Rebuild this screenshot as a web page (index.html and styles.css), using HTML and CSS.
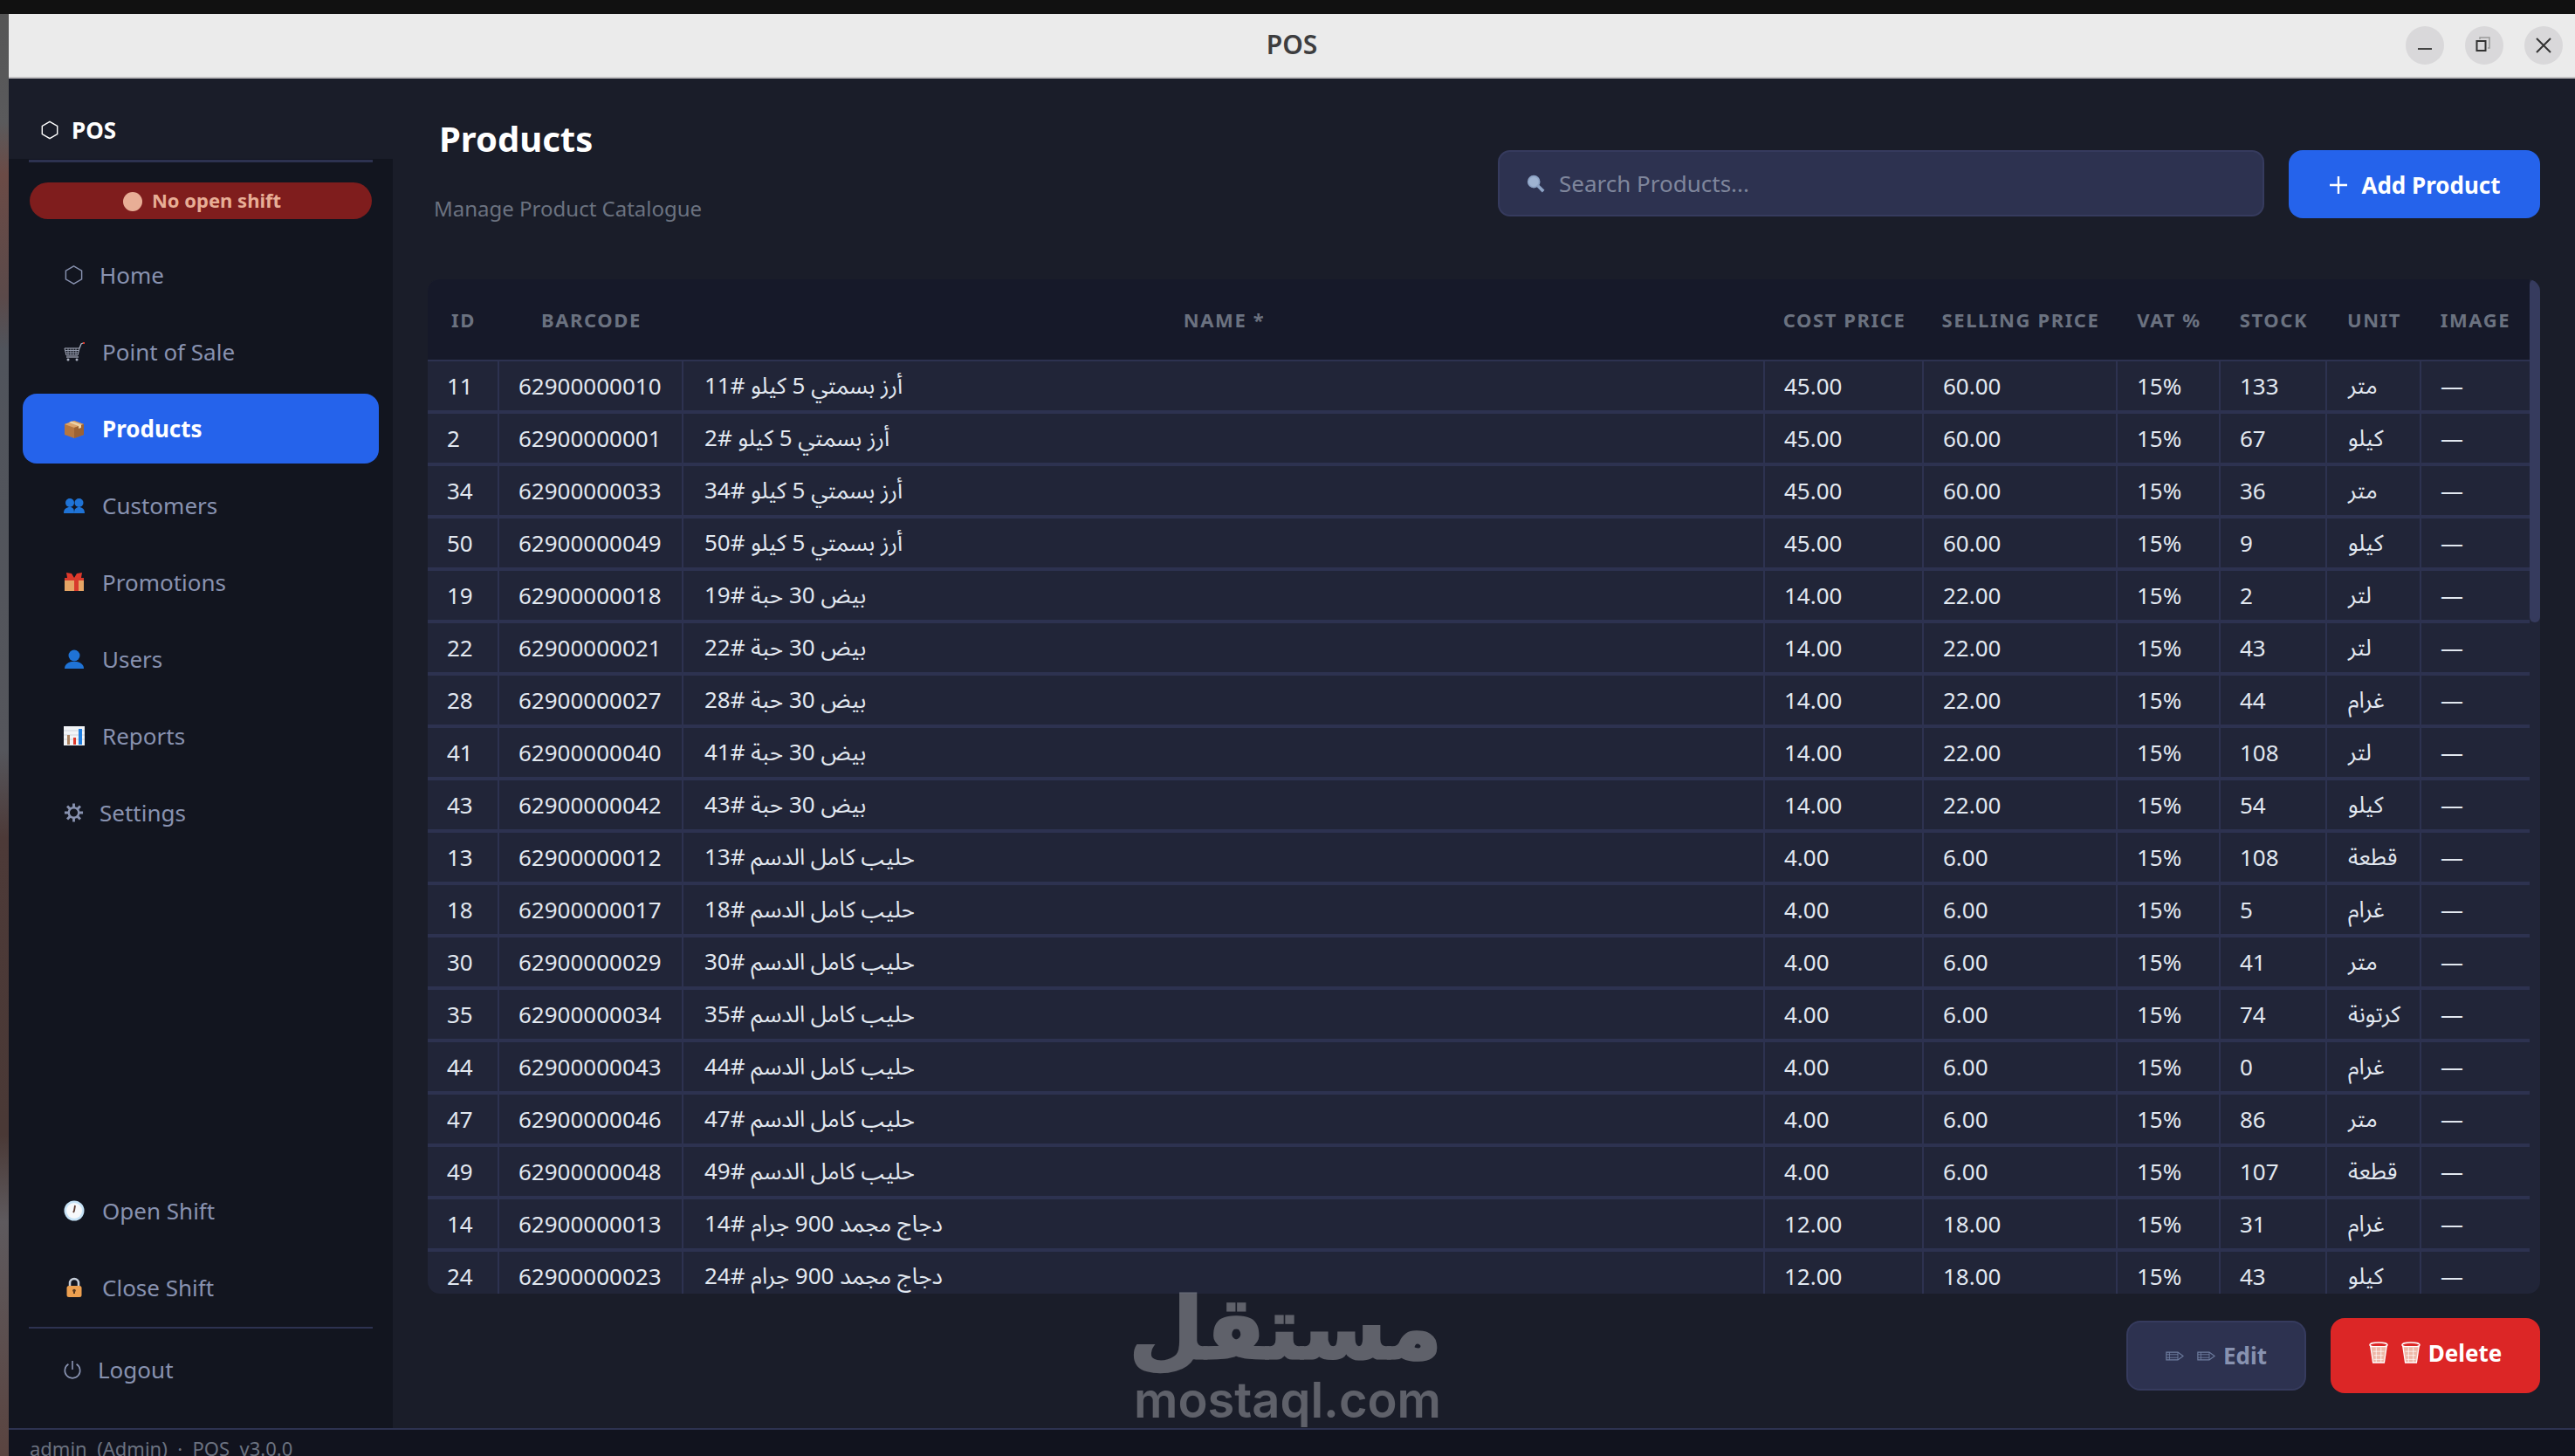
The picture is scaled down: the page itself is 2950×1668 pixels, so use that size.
FILE: index.html
```html
<!DOCTYPE html>
<html lang="en">
<head>
<meta charset="utf-8">
<title>POS</title>
<link rel="stylesheet" href="styles.css">
</head>
<body>
<svg class="defs" width="0" height="0" aria-hidden="true">
  <symbol id="i-hex" viewBox="0 0 24 24"><path d="M12 1.500 21.500 7v10L12 22.500 2.500 17V7z" fill="none" stroke="currentColor" stroke-width="1.500"/></symbol>
  <symbol id="i-cart" viewBox="0 0 24 24"><path d="M1 8h17l-2 8H3z" fill="none" stroke="#aab0c0" stroke-width="1"/><path d="M1 10.500h17M2 13h15M5 8v8M8 8v8M11 8v8M14 8v8" stroke="#8f96a8" stroke-width="1"/><path d="M18 8l2-5 2-1" fill="none" stroke="#aab0c0" stroke-width="1.300"/><path d="M22 1h2v2h-2z" fill="#e0392b"/><path d="M3 18h14" stroke="#aab0c0" stroke-width="1.200"/><circle cx="5" cy="21" r="1.500" fill="#aab0c0"/><circle cx="15" cy="21" r="1.500" fill="#aab0c0"/></symbol>
  <symbol id="i-box" viewBox="0 0 24 24"><path d="M1 7 12 3l11 4v12l-11 4L1 19z" fill="#b5763f"/><path d="M1 7l11 4 11-4-11-4z" fill="#dba36a"/><path d="M12 11v12l11-4V7z" fill="#9c6233"/><path d="M6 5l11 4v3l3-1V7.500L9 3.500z" fill="#ecd3a8"/></symbol>
  <symbol id="i-people" viewBox="0 0 24 24"><g fill="#1f73d6"><circle cx="7" cy="9" r="5"/><circle cx="17.500" cy="9" r="5"/><path d="M0 21c0-5 3-7 7-7s5 2 5 7zM12 21c0-5 2-7 5.500-7S24 16 24 21z"/></g></symbol>
  <symbol id="i-gift" viewBox="0 0 24 24"><path d="M1 7h22v15H1z" fill="#e5a565"/><path d="M12 7h5v15h-5z" fill="#d83a2c"/><path d="M1 7h22v3H1z" fill="#d83a2c"/><path d="M3 1l6 1 3 5 3-5 6-1-1 6H4z" fill="#e0392b"/></symbol>
  <symbol id="i-user" viewBox="0 0 24 24"><g fill="#1f73d6"><circle cx="12" cy="8" r="6.500"/><path d="M1 23c0-5 4-7 8-8h6c4 1 8 3 8 8z"/></g></symbol>
  <symbol id="i-chart" viewBox="0 0 24 24"><path d="M0 1h24v22H0z" fill="#f2f4f7"/><path d="M0 6h24M0 11h24M0 16h24" stroke="#cfd4dc"/><path d="M4 11h3v11H4z" fill="#a9815f"/><path d="M11 14h3v8h-3z" fill="#e0392b"/><path d="M17 4h4v18h-4z" fill="#1f7ee0"/></symbol>
  <symbol id="i-gear" viewBox="0 0 24 24"><circle cx="12" cy="12" r="6" fill="none" stroke="currentColor" stroke-width="2.500"/><path d="M12 1v5M12 18v5M1 12h5M18 12h5M4.200 4.200l3.500 3.500M16.300 16.300l3.500 3.500M19.800 4.200l-3.500 3.500M7.700 16.300l-3.500 3.500" stroke="currentColor" stroke-width="3"/></symbol>
  <symbol id="i-clock" viewBox="0 0 24 24"><circle cx="12" cy="12" r="11.500" fill="#c6e3f7"/><circle cx="12" cy="12" r="9" fill="#f7f9fb"/><path d="M12 12l1-6M12 12l-1 2" stroke="#5a3a30" stroke-width="1.800"/></symbol>
  <symbol id="i-lock" viewBox="0 0 24 24"><path d="M7 11V7a5 5 0 0 1 10 0v4" fill="none" stroke="#c4ccd8" stroke-width="2.500"/><rect x="3.500" y="10" width="17" height="13" rx="2.500" fill="#eda050"/><circle cx="12" cy="15.500" r="1.800" fill="#5a3a20"/><path d="M11 16h2v3h-2z" fill="#5a3a20"/></symbol>
  <symbol id="i-power" viewBox="0 0 24 24"><path d="M7 5.200a9.500 9.500 0 1 0 10 0M12 1v11" fill="none" stroke="currentColor" stroke-width="1.800"/></symbol>
  <symbol id="i-search" viewBox="0 0 24 24"><circle cx="10" cy="10" r="7" fill="#9fb3d1" stroke="#8ea4c6" stroke-width="2"/><path d="M15 15l7 7" stroke="#8ea4c6" stroke-width="4"/></symbol>
  <symbol id="i-pencil" viewBox="0 0 24 14"><path d="M1 2h15l7 5-7 5H1z" fill="none" stroke="currentColor" stroke-width="1.300"/><path d="M1 5h15M1 9h15M5 2v10M16 2v10" stroke="currentColor" stroke-width="1"/></symbol>
  <symbol id="i-trash" viewBox="0 0 24 28"><ellipse cx="12" cy="4" rx="11" ry="3" fill="none" stroke="#fff" stroke-width="1.600"/><path d="M2 6l3 20h14l3-20z" fill="#eeb8a8" stroke="#fff" stroke-width="1.400"/><path d="M5 12h14M6 17h12M6 22h12M9 7v19M15 7v19" stroke="#fff" stroke-width=".8"/></symbol>
</svg>
<div class="top-strip"></div>
<div class="window">
  <header class="titlebar">
    <span class="title">POS</span>
    <div class="controls">
      <span class="ctl"><svg width="24" height="24" viewBox="0 0 24 24"><path d="M4 16h16" stroke="#444" stroke-width="2"/></svg></span>
      <span class="ctl"><svg width="24" height="24" viewBox="0 0 24 24"><path d="M7 5V3h11v12h-2" fill="none" stroke="#999" stroke-width="1.500"/><rect x="3.500" y="7" width="10" height="11" fill="none" stroke="#333" stroke-width="2"/></svg></span>
      <span class="ctl"><svg width="24" height="24" viewBox="0 0 24 24"><path d="M4 4l16 16M20 4 4 20" stroke="#333" stroke-width="2"/></svg></span>
    </div>
  </header>
  <div class="app">
    <aside class="sidebar">
      <div class="brand"><svg class="brand-icon"><use href="#i-hex"/></svg><span>POS</span></div>
      <div class="side-body">
        <div class="rule"></div>
        <div class="shift-badge"><span class="dot"></span><span>No open shift</span></div>
        <nav class="nav">
          <a class="item thin"><svg class="ico"><use href="#i-hex"/></svg>Home</a>
          <a class="item"><svg class="ico"><use href="#i-cart"/></svg>Point of Sale</a>
          <a class="item active"><svg class="ico"><use href="#i-box"/></svg>Products</a>
          <a class="item"><svg class="ico"><use href="#i-people"/></svg>Customers</a>
          <a class="item"><svg class="ico"><use href="#i-gift"/></svg>Promotions</a>
          <a class="item"><svg class="ico"><use href="#i-user"/></svg>Users</a>
          <a class="item"><svg class="ico"><use href="#i-chart"/></svg>Reports</a>
          <a class="item thin"><svg class="ico"><use href="#i-gear"/></svg>Settings</a>
        </nav>
        <nav class="nav nav-bottom">
          <a class="item"><svg class="ico"><use href="#i-clock"/></svg>Open Shift</a>
          <a class="item"><svg class="ico"><use href="#i-lock"/></svg>Close Shift</a>
        </nav>
        <div class="rule rule-low"></div>
        <a class="item logout"><svg class="ico"><use href="#i-power"/></svg>Logout</a>
      </div>
    </aside>
    <main class="main">
      <section class="head">
        <div class="head-text">
          <h1>Products</h1>
          <p>Manage Product Catalogue</p>
        </div>
        <div class="search"><svg class="search-ico"><use href="#i-search"/></svg><span>Search Products...</span></div>
        <button class="add"><svg class="plus" viewBox="0 0 20 20"><path d="M10 0v20M0 10h20" stroke="#fff" stroke-width="2.400"/></svg>Add Product</button>
      </section>
      <section class="table-card">
        <div class="table-scroll">
          <table>
            <colgroup><col class="c1"><col class="c2"><col class="c3"><col class="c4"><col class="c5"><col class="c6"><col class="c7"><col class="c8"><col class="c9"></colgroup>
            <thead><tr><th>ID</th><th>BARCODE</th><th>NAME *</th><th>COST PRICE</th><th>SELLING PRICE</th><th>VAT %</th><th>STOCK</th><th>UNIT</th><th>IMAGE</th></tr></thead>
            <tbody>
              <tr><td>11</td><td>62900000010</td><td class="ar" dir="rtl">أرز بسمتي 5 كيلو #11</td><td>45.00</td><td>60.00</td><td>15%</td><td>133</td><td class="ar" dir="rtl">متر</td><td>—</td></tr>
              <tr><td>2</td><td>62900000001</td><td class="ar" dir="rtl">أرز بسمتي 5 كيلو #2</td><td>45.00</td><td>60.00</td><td>15%</td><td>67</td><td class="ar" dir="rtl">كيلو</td><td>—</td></tr>
              <tr><td>34</td><td>62900000033</td><td class="ar" dir="rtl">أرز بسمتي 5 كيلو #34</td><td>45.00</td><td>60.00</td><td>15%</td><td>36</td><td class="ar" dir="rtl">متر</td><td>—</td></tr>
              <tr><td>50</td><td>62900000049</td><td class="ar" dir="rtl">أرز بسمتي 5 كيلو #50</td><td>45.00</td><td>60.00</td><td>15%</td><td>9</td><td class="ar" dir="rtl">كيلو</td><td>—</td></tr>
              <tr><td>19</td><td>62900000018</td><td class="ar" dir="rtl">بيض 30 حبة #19</td><td>14.00</td><td>22.00</td><td>15%</td><td>2</td><td class="ar" dir="rtl">لتر</td><td>—</td></tr>
              <tr><td>22</td><td>62900000021</td><td class="ar" dir="rtl">بيض 30 حبة #22</td><td>14.00</td><td>22.00</td><td>15%</td><td>43</td><td class="ar" dir="rtl">لتر</td><td>—</td></tr>
              <tr><td>28</td><td>62900000027</td><td class="ar" dir="rtl">بيض 30 حبة #28</td><td>14.00</td><td>22.00</td><td>15%</td><td>44</td><td class="ar" dir="rtl">غرام</td><td>—</td></tr>
              <tr><td>41</td><td>62900000040</td><td class="ar" dir="rtl">بيض 30 حبة #41</td><td>14.00</td><td>22.00</td><td>15%</td><td>108</td><td class="ar" dir="rtl">لتر</td><td>—</td></tr>
              <tr><td>43</td><td>62900000042</td><td class="ar" dir="rtl">بيض 30 حبة #43</td><td>14.00</td><td>22.00</td><td>15%</td><td>54</td><td class="ar" dir="rtl">كيلو</td><td>—</td></tr>
              <tr><td>13</td><td>62900000012</td><td class="ar" dir="rtl">حليب كامل الدسم #13</td><td>4.00</td><td>6.00</td><td>15%</td><td>108</td><td class="ar" dir="rtl">قطعة</td><td>—</td></tr>
              <tr><td>18</td><td>62900000017</td><td class="ar" dir="rtl">حليب كامل الدسم #18</td><td>4.00</td><td>6.00</td><td>15%</td><td>5</td><td class="ar" dir="rtl">غرام</td><td>—</td></tr>
              <tr><td>30</td><td>62900000029</td><td class="ar" dir="rtl">حليب كامل الدسم #30</td><td>4.00</td><td>6.00</td><td>15%</td><td>41</td><td class="ar" dir="rtl">متر</td><td>—</td></tr>
              <tr><td>35</td><td>62900000034</td><td class="ar" dir="rtl">حليب كامل الدسم #35</td><td>4.00</td><td>6.00</td><td>15%</td><td>74</td><td class="ar" dir="rtl">كرتونة</td><td>—</td></tr>
              <tr><td>44</td><td>62900000043</td><td class="ar" dir="rtl">حليب كامل الدسم #44</td><td>4.00</td><td>6.00</td><td>15%</td><td>0</td><td class="ar" dir="rtl">غرام</td><td>—</td></tr>
              <tr><td>47</td><td>62900000046</td><td class="ar" dir="rtl">حليب كامل الدسم #47</td><td>4.00</td><td>6.00</td><td>15%</td><td>86</td><td class="ar" dir="rtl">متر</td><td>—</td></tr>
              <tr><td>49</td><td>62900000048</td><td class="ar" dir="rtl">حليب كامل الدسم #49</td><td>4.00</td><td>6.00</td><td>15%</td><td>107</td><td class="ar" dir="rtl">قطعة</td><td>—</td></tr>
              <tr><td>14</td><td>62900000013</td><td class="ar" dir="rtl">دجاج مجمد 900 جرام #14</td><td>12.00</td><td>18.00</td><td>15%</td><td>31</td><td class="ar" dir="rtl">غرام</td><td>—</td></tr>
              <tr><td>24</td><td>62900000023</td><td class="ar" dir="rtl">دجاج مجمد 900 جرام #24</td><td>12.00</td><td>18.00</td><td>15%</td><td>43</td><td class="ar" dir="rtl">كيلو</td><td>—</td></tr>
            </tbody>
          </table>
        </div>
        <div class="scrollbar"><div class="thumb"></div></div>
      </section>
      <section class="actions">
        <button class="edit"><svg class="pen"><use href="#i-pencil"/></svg><svg class="pen pen-last"><use href="#i-pencil"/></svg>Edit</button>
        <button class="delete"><svg class="bin"><use href="#i-trash"/></svg><svg class="bin bin-last"><use href="#i-trash"/></svg>Delete</button>
      </section>
    </main>
  </div>
  <footer class="status">admin&nbsp; (Admin) &nbsp;·&nbsp; POS&nbsp; v3.0.0</footer>
</div>
<div class="watermark">
  <div class="wm-ar" dir="rtl">مستقل</div>
  <div class="wm-en">mostaql.com</div>
</div>
</body>
</html>
```
FILE: styles.css
```css
* { box-sizing: border-box; }
html, body { margin: 0; height: 100%; }
body {
  width: 2950px; height: 1668px; overflow: hidden; position: relative;
  font-family: "Noto Sans", "Noto Sans Arabic", "DejaVu Sans", sans-serif;
  background: linear-gradient(180deg, #555 0, #5a5a5c 140px, #6b4b46 200px, #5b4a4a 340px, #50545c 400px, #55565c 860px, #4d3a38 960px, #4a3936 1300px, #5e5a5e 1400px, #5a4440 1668px);
}
.defs { position: absolute; }
.top-strip { height: 16px; background: #111; }
.window { margin-left: 10px; height: 1652px; display: flex; flex-direction: column; background: #1a1d29; }

.titlebar { height: 74px; flex: none; background: #ebebeb; border-bottom: 2px solid #c2c1c3; display: flex; align-items: center; justify-content: center; position: relative; padding-bottom: 3px; }
.title { font-size: 30px; font-weight: 600; color: #3d3d3f; }
.controls { position: absolute; right: 14px; top: 14px; display: flex; gap: 24px; }
.ctl { width: 44px; height: 44px; border-radius: 50%; background: #d9d8da; display: flex; align-items: center; justify-content: center; }

.app { flex: 1; min-height: 0; display: flex; }
.sidebar { width: 440px; flex: none; display: flex; flex-direction: column; }
.brand { height: 92px; flex: none; display: flex; align-items: center; gap: 14px; padding: 26px 0 0 36px; color: #fff; font-size: 26px; font-weight: 700; }
.brand-icon { width: 22px; height: 24px; }
.side-body { flex: 1; background: #12151f; display: flex; flex-direction: column; padding: 1px 16px 0; }
.rule { height: 3px; background: #2d3250; margin: 0 7px; flex: none; }
.shift-badge { height: 42px; margin: 23px 8px 24px; flex: none; border-radius: 21px; background: #7f1d1d; color: #e8ae96; font-size: 22px; font-weight: 700; display: flex; align-items: center; justify-content: center; gap: 11px; padding: 0 0 3px 3px; }
.dot { width: 22px; height: 22px; border-radius: 50%; background: #e8ae96; margin-top: 5px; }
.nav { display: flex; flex-direction: column; gap: 8px; }
.nav-bottom { margin-top: auto; }
.item { height: 80px; flex: none; display: flex; align-items: center; gap: 20px; padding-left: 47px; color: #8892b0; font-size: 26px; border-radius: 16px; }
.item.thin { gap: 18px; }
.item.thin .ico { color: #8892b0; width: 23px; }
.ico { width: 24px; height: 24px; flex: none; }
.active { background: #2563eb; color: #fff; font-weight: 700; }
.rule-low { height: 2px; margin-top: 5px; }
.logout { margin: 7px 0 27px; padding-left: 46px; gap: 18px; }
.logout .ico { width: 22px; color: #8892b0; }

.main { flex: 1; min-width: 0; display: flex; flex-direction: column; padding: 0 40px; }
.head { height: 230px; flex: none; display: flex; align-items: flex-start; }
.head-text { flex: 1; }
h1 { margin: 41px 0 0 13px; font-size: 40px; line-height: 56px; font-weight: 700; color: #fff; }
.head-text p { margin: 36px 0 0 7px; font-size: 24px; line-height: 32px; color: #6b7280; }
.search { width: 878px; height: 76px; margin-top: 82px; background: #2d3250; border: 2px solid #363b5e; border-radius: 14px; display: flex; align-items: center; gap: 16px; padding-left: 30px; font-size: 26px; color: #7f869c; }
.search-ico { width: 22px; height: 22px; }
button { font-family: inherit; font-weight: 700; font-size: 26px; border: none; display: flex; align-items: center; justify-content: center; }
.add { width: 288px; height: 78px; margin: 82px 0 0 28px; background: #2563eb; color: #fff; border-radius: 16px; gap: 16px; padding: 2px 0 0 2px; }
.plus { width: 20px; height: 20px; }

.table-card { height: 1162px; flex: none; display: flex; background: #212538; border-radius: 14px; overflow: hidden; }
.table-scroll { flex: 1; min-width: 0; overflow: hidden; }
table { width: 2408px; table-layout: fixed; border-collapse: separate; border-spacing: 0; }
.c1 { width: 82px; } .c2 { width: 211px; } .c3 { width: 1239px; } .c4 { width: 182px; } .c5 { width: 222px; } .c6 { width: 118px; } .c7 { width: 122px; } .c8 { width: 108px; } .c9 { width: 124px; }
th { height: 94px; background: #161929; border-bottom: 2px solid #2d3250; color: #6b7280; font-size: 22px; font-weight: 700; letter-spacing: 1.600px; text-align: center; white-space: nowrap; padding: 0; }
td { height: 60px; padding: 0 22px; border-right: 2px solid #2d3250; border-bottom: 4px solid #2d3250; color: #e2e8f0; font-size: 26px; white-space: nowrap; overflow: hidden; }
td:last-child { border-right: none; }
.ar { text-align: left; padding-left: 24px; }
.scrollbar { width: 12px; flex: none; }
.thumb { height: 393px; background: #363b5e; border-radius: 6px; }

.actions { padding-top: 28px; display: flex; justify-content: flex-end; align-items: center; gap: 28px; }
.edit { width: 206px; height: 80px; background: #2d3250; border: 2px solid #363b5e; border-radius: 16px; color: #8892b0; padding: 0; }
.pen { width: 21px; height: 13px; color: #6f7ea0; }
.pen-last { margin: 0 9px 0 15px; }
.delete { width: 240px; height: 86px; background: #dc2626; color: #fff; border-radius: 16px; padding: 0 0 6px; }
.bin { width: 22px; height: 26px; }
.bin-last { margin: 0 9px 0 15px; }

.status { height: 32px; flex: none; border-top: 2px solid #2d3250; background: #11131e; color: #6b7280; font-size: 22px; line-height: 30px; padding: 6px 0 0 24px; overflow: hidden; white-space: pre; }

.watermark { position: absolute; left: 1298px; top: 1472px; width: 354px; color: #fff; opacity: .3; text-align: center; pointer-events: none; }
.wm-ar { font-family: "DejaVu Sans", sans-serif; font-weight: 700; font-size: 98px; line-height: 100px; height: 104px; white-space: nowrap; -webkit-text-stroke: 3px #fff; }
.wm-en { font-family: Inter, "Noto Sans", sans-serif; font-weight: 600; font-size: 56px; line-height: 56px; white-space: nowrap; }
```
